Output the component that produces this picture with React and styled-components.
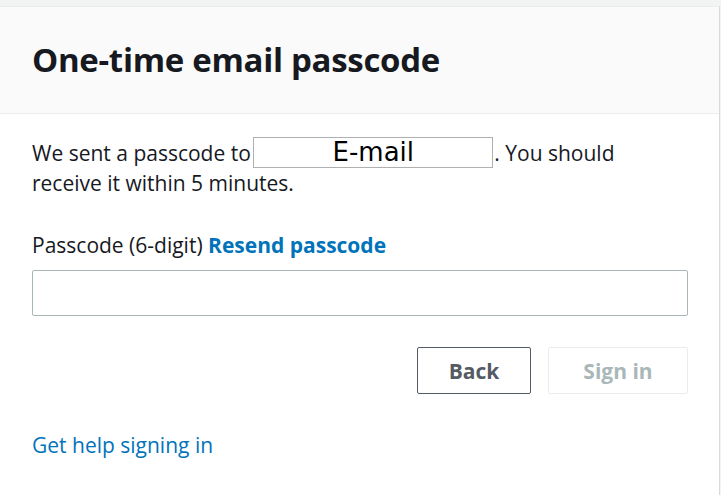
import React, { useState } from "react";
import styled, { createGlobalStyle } from "styled-components";

const GlobalStyle = createGlobalStyle`
  html, body {
    margin: 0;
    padding: 0;
    background: #f2f3f3;
  }
  body {
    font-family: "Open Sans", "Liberation Sans", Arial, sans-serif;
    color: #16191f;
  }
`;

const Page = styled.div`
  padding-top: 6px;
  width: 721px;
  height: 495px;
  box-sizing: border-box;
  overflow: hidden;
`;

const Card = styled.div`
  width: 720px;
  height: 489px;
  box-sizing: border-box;
  background: #ffffff;
  border-top: 1px solid #eaeded;
  border-right: 1px solid #d5dbdb;
`;

const Header = styled.div`
  height: 107px;
  box-sizing: border-box;
  background: #fafafa;
  border-bottom: 1px solid #eaeded;
  display: flex;
  align-items: center;
  padding: 0 32px 2px;
`;

const Title = styled.h1`
  margin: 0;
  font-size: 33px;
  font-weight: 700;
  letter-spacing: -0.3px;
  color: #16191f;
`;

const Body = styled.div`
  padding: 24px 31px 0 32px;
`;

const Message = styled.p`
  margin: 0;
  font-size: 21px;
  line-height: 30px;
  color: #16191f;
`;

const EmailMask = styled.span`
  display: inline-block;
  width: 240px;
  height: 31px;
  box-sizing: border-box;
  border: 1px solid #b0b0b0;
  background: #ffffff;
  vertical-align: top;
  margin: -1px 1px 0 -3px;
  text-align: center;
  font-family: "DejaVu Sans", Verdana, sans-serif;
  font-size: 26px;
  line-height: 29px;
  color: #000000;
`;

const Field = styled.div`
  margin-top: 32px;
`;

const Label = styled.label`
  display: block;
  font-size: 21px;
  line-height: 30px;
  color: #16191f;
`;

const Link = styled.a`
  color: #0073bb;
  font-weight: ${(p) => (p.$bold ? 700 : 400)};
  text-decoration: none;
  cursor: pointer;
`;

const Input = styled.input`
  display: block;
  width: 100%;
  height: 46px;
  box-sizing: border-box;
  margin-top: 10px;
  border: 1px solid #aab7b8;
  border-radius: 2px;
  padding: 0 12px;
  font-size: 20px;
  font-family: inherit;
  outline: none;
`;

const Actions = styled.div`
  display: flex;
  justify-content: flex-end;
  gap: 17px;
  margin-top: 31px;
`;

const Button = styled.button`
  height: 47px;
  width: ${(p) => p.$width}px;
  box-sizing: border-box;
  border-radius: 2px;
  background: #ffffff;
  border: 1px solid ${(p) => (p.disabled ? "#eaeded" : "#545b64")};
  color: ${(p) => (p.disabled ? "#aab7b8" : "#545b64")};
  font-family: inherit;
  font-size: 21px;
  font-weight: 700;
  cursor: ${(p) => (p.disabled ? "default" : "pointer")};
`;

const Help = styled.div`
  margin-top: 36px;
  font-size: 21px;
  line-height: 30px;
`;

const App = () => {
  const [code, setCode] = useState("");

  return (
    <>
      <GlobalStyle />
      <Page>
        <Card>
          <Header>
            <Title>One-time email passcode</Title>
          </Header>
          <Body>
            <Message>
              We sent a passcode to <EmailMask>E-mail</EmailMask>. You should
              <br />
              receive it within 5 minutes.
            </Message>
            <Field>
              <Label htmlFor="passcode">
                Passcode (6-digit) <Link $bold>Resend passcode</Link>
              </Label>
              <Input
                id="passcode"
                type="text"
                value={code}
                onChange={(e) => setCode(e.target.value)}
              />
            </Field>
            <Actions>
              <Button $width={114}>Back</Button>
              <Button $width={140} disabled={code.length !== 6}>
                Sign in
              </Button>
            </Actions>
            <Help>
              <Link>Get help signing in</Link>
            </Help>
          </Body>
        </Card>
      </Page>
    </>
  );
};

export default App;
